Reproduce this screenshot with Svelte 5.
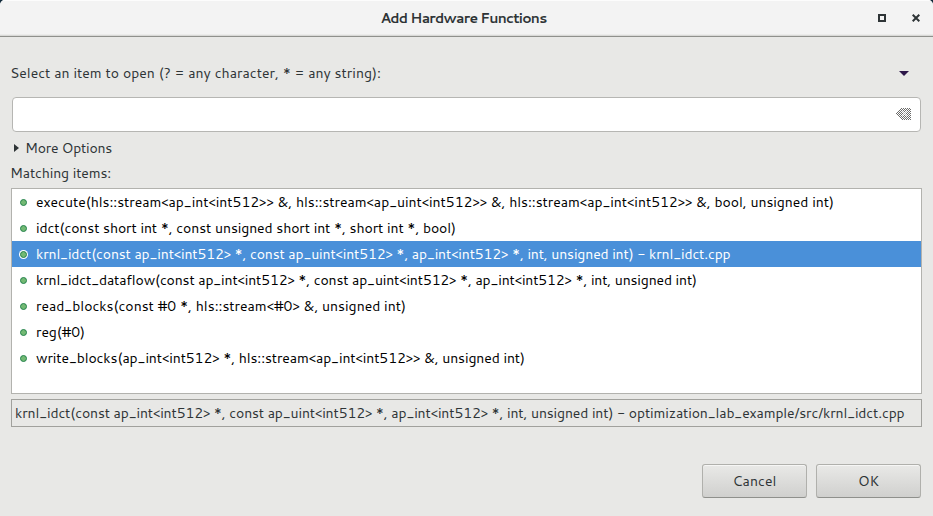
<script>
  const items = [
    { text: 'execute(hls::stream<ap_int<int512>> &, hls::stream<ap_uint<int512>> &, hls::stream<ap_int<int512>> &, bool, unsigned int)', width: 798 },
    { text: 'idct(const short int *, const unsigned short int *, short int *, bool)', width: 420 },
    { text: 'krnl_idct(const ap_int<int512> *, const ap_uint<int512> *, ap_int<int512> *, int, unsigned int) - krnl_idct.cpp', width: 694.5 },
    { text: 'krnl_idct_dataflow(const ap_int<int512> *, const ap_uint<int512> *, ap_int<int512> *, int, unsigned int)', width: 661 },
    { text: 'read_blocks(const #0 *, hls::stream<#0> &, unsigned int)', width: 370 },
    { text: 'reg(#0)', width: 49 },
    { text: 'write_blocks(ap_int<int512> *, hls::stream<ap_int<int512>> &, unsigned int)', width: 489 }
  ];
  let selected = $state(2);
  let query = $state('');

  // Track a line of text so that it occupies the given width.
  function fit(node, width) {
    const natural = node.getBoundingClientRect().width;
    node.style.letterSpacing = (width - natural) / node.textContent.length + 'px';
  }
</script>

<div class="desktop">
  <div class="window">
    <header>
      <h1><span use:fit={166}>Add Hardware Functions</span></h1>
      <div class="controls">
        <button aria-label="Maximize">
          <svg width="8" height="8" viewBox="0 0 8 8"><path d="M1 1h6v6H1z" fill="none" stroke="#2e3436" stroke-width="2" /></svg>
        </button>
        <button aria-label="Close">
          <svg width="8" height="8" viewBox="0 0 8 8"><path d="M.7.7l6.6 6.6M7.3.7L.7 7.3" fill="none" stroke="#2e3436" stroke-width="2" /></svg>
        </button>
      </div>
    </header>

    <main>
      <div class="prompt">
        <span use:fit={371}>Select an item to open (? = any character, * = any string):</span>
        <svg width="10" height="5" viewBox="0 0 10 5"><path d="M0 0h10L5 5z" fill="#2c1648" /></svg>
      </div>

      <div class="search">
        <input bind:value={query} aria-label="Filter" />
        <svg width="16" height="12" viewBox="0 0 16 12" shape-rendering="crispEdges">
          <defs>
            <pattern id="dots" width="2" height="2" patternUnits="userSpaceOnUse">
              <path d="M0 0h1v1H0zM1 1h1v1H1z" fill="#6c6c6a" />
            </pattern>
          </defs>
          <path d="M6 0h10v12H6L0 6z" fill="url(#dots)" />
          <path d="M7 3l5 5M12 3L7 8" stroke="#fff" stroke-width="1" opacity=".5" />
        </svg>
      </div>

      <div class="more">
        <svg width="5" height="8" viewBox="0 0 5 8"><path d="M0 0l5 4-5 4z" fill="#2e3436" /></svg>
        <span use:fit={87}>More Options</span>
      </div>
      <div class="matching"><span use:fit={101}>Matching items:</span></div>

      <div class="list" role="listbox">
        {#each items as item, i}
          <!-- svelte-ignore a11y_click_events_have_key_events -->
          <div class="item" class:selected={selected === i} role="option" tabindex="-1" aria-selected={selected === i} onclick={() => (selected = i)}>
            <i></i><span use:fit={item.width}>{item.text}</span>
          </div>
        {/each}
      </div>

      <div class="status">
        <span use:fit={889.5}>krnl_idct(const ap_int&lt;int512&gt; *, const ap_uint&lt;int512&gt; *, ap_int&lt;int512&gt; *, int, unsigned int) - optimization_lab_example/src/krnl_idct.cpp</span>
      </div>

      <div class="actions">
        <button><span use:fit={44}>Cancel</span></button>
        <button><span use:fit={21}>OK</span></button>
      </div>
    </main>
  </div>
</div>

<style>
  .desktop { background: #10293a; width: 933px; height: 516px; overflow: hidden; }
  .window {
    height: 516px;
    background: #e8e8e6;
    border-radius: 5px 5px 0 0;
    overflow: hidden;
    font: 14px/20px Cantarell, "Noto Sans", sans-serif;
    color: #2e3436;
  }
  span { white-space: pre; display: inline-block; }
  svg { display: block; flex: none; }
  header {
    box-sizing: border-box;
    height: 37px;
    position: relative;
    display: flex;
    align-items: center;
    justify-content: center;
    background: #f3f3f3;
    border-top: 1px solid #fcfcfc;
    border-bottom: 1px solid #8f908c;
    box-shadow: inset 0 -1px #d9d9d7, inset 0 -2px #ebebea;
  }
  h1 { margin: 0 6px 2px 0; font-size: 14px; line-height: 20px; font-weight: 700; }
  .controls { position: absolute; right: 13px; top: 13px; display: flex; gap: 26px; }
  .controls button { padding: 0; border: 0; background: none; }
  main { padding: 26px 11px 0 11px; }
  .prompt { display: flex; align-items: center; justify-content: space-between; height: 20px; padding-right: 13px; }
  .prompt span, .matching span, .more span { margin-left: -1px; }
  .search {
    box-sizing: border-box;
    height: 35px;
    margin: 14px 1px 0;
    display: flex;
    align-items: center;
    padding: 0 9px 0 8px;
    background: #fff;
    border: 1px solid #b6b6b3;
    border-radius: 4px;
  }
  .search svg { margin-bottom: 1px; }
  input { flex: 1; border: 0; outline: 0; padding: 0; background: none; font: inherit; }
  .more { display: flex; align-items: center; gap: 7px; height: 20px; margin-top: 6px; padding-left: 3px; }
  .matching { height: 20px; margin-top: 5px; }
  .list { box-sizing: border-box; height: 206px; margin-top: 5px; border: 1px solid #b2b2ae; background: #fff; color: #000; }
  .item { display: flex; align-items: center; height: 26px; padding-left: 8px; gap: 9px; }
  .item i { box-sizing: border-box; width: 7px; height: 7px; border-radius: 50%; background: #73b973; border: 1px solid #23824c; }
  .selected { background: #4a90d9; color: #fff; }
  .selected i { box-shadow: 0 0 0 1px #fff; }
  .status { box-sizing: border-box; height: 28px; margin-top: 5px; padding: 3px; border: 1px solid #a1a19d; }
  .actions { display: flex; justify-content: flex-end; gap: 9px; margin: 37px 1px 0 0; }
  .actions button {
    box-sizing: border-box;
    width: 105px;
    height: 34px;
    padding: 0;
    font: inherit;
    color: inherit;
    border: 1px solid #b0b0ac;
    border-bottom-color: #8f908c;
    border-radius: 3px;
    background: linear-gradient(#e9e9e7, #d0d0ce);
    box-shadow: inset 0 1px #f6f6f5;
  }
</style>
